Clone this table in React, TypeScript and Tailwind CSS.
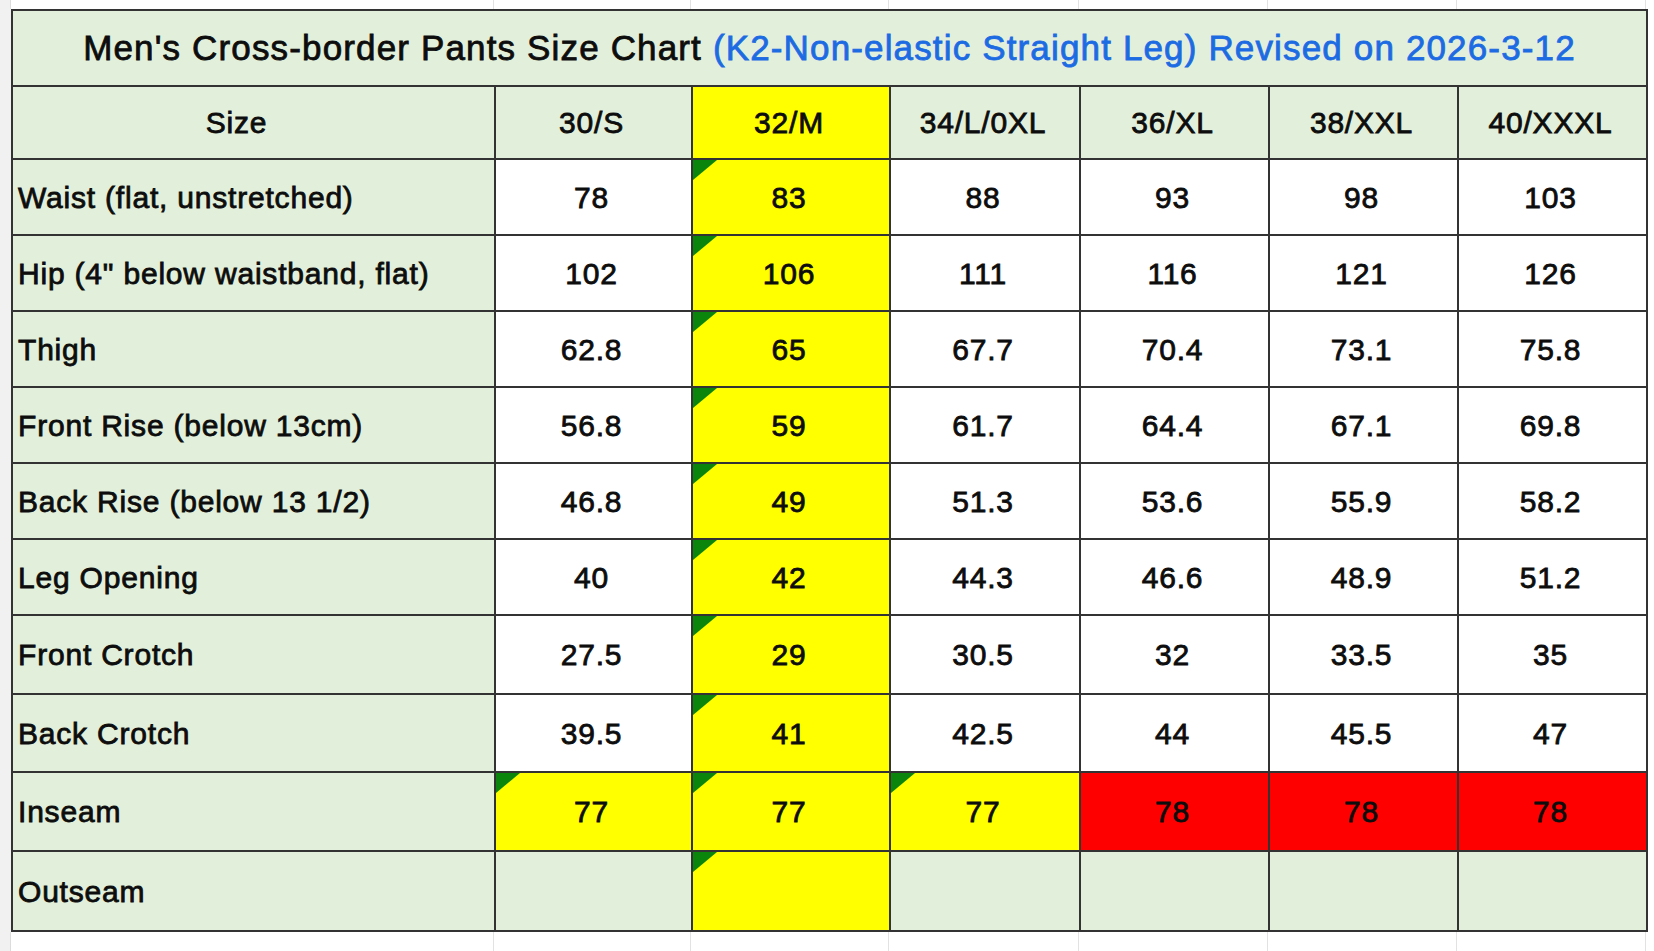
import React from 'react'

const sizes = ['30/S', '32/M', '34/L/0XL', '36/XL', '38/XXL', '40/XXXL']
const colW = ['w-[483px]', 'w-[197px]', 'w-[198px]', 'w-[190px]', 'w-[189px]', 'w-[189px]', 'w-[189px]']

type Row = { label: string; values: string[]; h: string }

const rows: Row[] = [
  { label: 'Waist (flat, unstretched)', values: ['78', '83', '88', '93', '98', '103'], h: 'h-[76px]' },
  { label: 'Hip (4" below waistband, flat)', values: ['102', '106', '111', '116', '121', '126'], h: 'h-[76px]' },
  { label: 'Thigh', values: ['62.8', '65', '67.7', '70.4', '73.1', '75.8'], h: 'h-[76px]' },
  { label: 'Front Rise (below 13cm)', values: ['56.8', '59', '61.7', '64.4', '67.1', '69.8'], h: 'h-[76px]' },
  { label: 'Back Rise (below 13 1/2)', values: ['46.8', '49', '51.3', '53.6', '55.9', '58.2'], h: 'h-[76px]' },
  { label: 'Leg Opening', values: ['40', '42', '44.3', '46.6', '48.9', '51.2'], h: 'h-[76px]' },
  { label: 'Front Crotch', values: ['27.5', '29', '30.5', '32', '33.5', '35'], h: 'h-[79px]' },
  { label: 'Back Crotch', values: ['39.5', '41', '42.5', '44', '45.5', '47'], h: 'h-[78px]' },
]

const cell = 'border-2 border-[#333] text-center align-middle p-0'
const text = 'text-[30px] tracking-[0.8px] text-[#0d0d0d] [-webkit-text-stroke:0.8px_#0d0d0d]'
const num = `${text} pr-[4px]`

function Flag() {
  return (
    <span className="absolute left-0 top-0 h-[20px] w-[24px] bg-[#0b850b] [clip-path:polygon(0_0,100%_0,0_100%)]" />
  )
}

function Strip({ h }: { h: string }) {
  return (
    <div className={`flex ${h}`}>
      <div className="w-[11px] border-r border-[#dcdcdc] bg-[#f1f1f1]" />
      {colW.map((w, i) => (
        <div key={i} className={`${w} border-r border-[#e2e2e2]`} />
      ))}
      <div className="flex-1" />
    </div>
  )
}

export default function App() {
  return (
    <div className="h-[951px] w-[1654px] overflow-hidden bg-white font-['Liberation_Sans',Arial,sans-serif]">
      <Strip h="h-[9px]" />
      <div className="flex">
        <div className="w-[11px] shrink-0 bg-[#f1f1f1]" />
        <table className="w-[1635px] table-fixed border-collapse">
          <colgroup>
            {colW.map((w, i) => (
              <col key={i} className={w} />
            ))}
          </colgroup>
          <tbody>
            <tr className="h-[76px] bg-[#e2efda]">
              <td colSpan={7} className={cell}>
                <span className="text-[35px] tracking-[1.15px] text-[#0d0d0d] [-webkit-text-stroke:0.8px_#0d0d0d]">
                  Men's Cross-border Pants Size Chart{' '}
                  <span className="text-[#1d6be3] [-webkit-text-stroke:0.8px_#1d6be3]">
                    (K2-Non-elastic Straight Leg) Revised on 2026-3-12
                  </span>
                </span>
              </td>
            </tr>
            <tr className="h-[73px]">
              <td className={`${cell} bg-[#e2efda] pr-[34px]`}>
                <span className={text}>Size</span>
              </td>
              {sizes.map((s, i) => (
                <td key={s} className={`${cell} ${i === 1 ? 'bg-[#ffff00]' : 'bg-[#e2efda]'}`}>
                  <span className={num}>{s}</span>
                </td>
              ))}
            </tr>
            {rows.map((r) => (
              <tr key={r.label} className={r.h}>
                <td className={`${cell} bg-[#e2efda] pl-[5px] text-left`}>
                  <span className={text}>{r.label}</span>
                </td>
                {r.values.map((v, i) => (
                  <td key={i} className={`${cell} relative ${i === 1 ? 'bg-[#ffff00]' : 'bg-white'}`}>
                    {i === 1 ? <Flag /> : null}
                    <span className={num}>{v}</span>
                  </td>
                ))}
              </tr>
            ))}
            <tr className="h-[79px]">
              <td className={`${cell} bg-[#e2efda] pl-[5px] text-left`}>
                <span className={text}>Inseam</span>
              </td>
              {['77', '77', '77', '78', '78', '78'].map((v, i) => (
                <td key={i} className={`${cell} relative ${i < 3 ? 'bg-[#ffff00]' : 'bg-[#ff0000]'}`}>
                  {i < 3 ? <Flag /> : null}
                  <span className={num}>{v}</span>
                </td>
              ))}
            </tr>
            <tr className="h-[80px]">
              <td className={`${cell} bg-[#e2efda] pl-[5px] text-left`}>
                <span className={text}>Outseam</span>
              </td>
              {sizes.map((s, i) => (
                <td key={s} className={`${cell} relative ${i === 1 ? 'bg-[#ffff00]' : 'bg-[#e2efda]'}`}>
                  {i === 1 ? <Flag /> : null}
                </td>
              ))}
            </tr>
          </tbody>
        </table>
        <div className="flex-1" />
      </div>
      <Strip h="h-[30px]" />
    </div>
  )
}
